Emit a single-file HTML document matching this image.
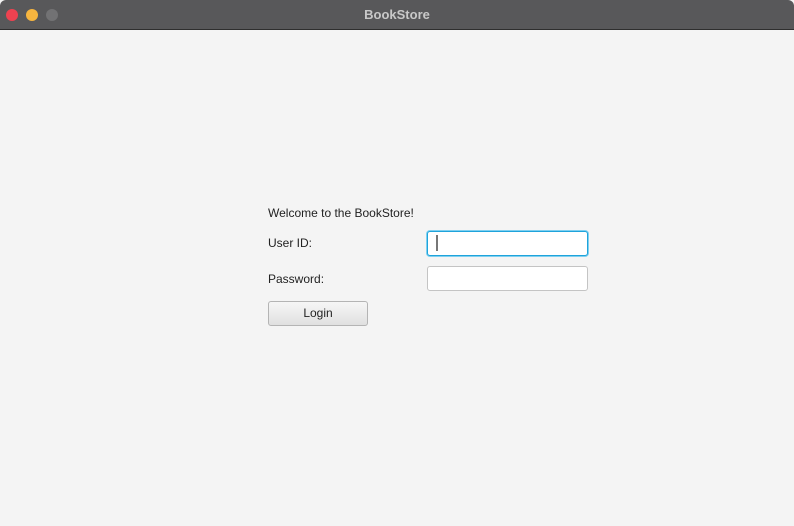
<!DOCTYPE html>
<html><head><meta charset="utf-8"><style>
body{margin:0;width:794px;height:526px;background:#f4f4f4;font-family:"Liberation Sans",sans-serif;position:relative;overflow:hidden}
.tb{position:absolute;left:0;top:0;width:794px;height:29px;background:#58585a;border-bottom:1px solid #2e2e2e;border-radius:6px 6px 0 0}
.tb .t{position:absolute;width:100%;text-align:center;top:7px;color:#c8c8c8;font-size:13px;font-weight:bold}
.d{position:absolute;top:9px;width:12px;height:12px;border-radius:50%}
.l{position:absolute;font-size:12px;color:#222}
.in{position:absolute;left:427px;width:159px;height:23px;background:#fff;border:1px solid #c4c4c4;border-radius:3px}
.f{border:1px solid #1fa3db;box-shadow:0 0 0 1px #7fd0f0}
.btn{position:absolute;left:268px;top:301px;width:98px;height:23px;border:1px solid #b4b4b4;border-radius:3px;background:linear-gradient(#f6f6f6,#e0e0e0);font-size:12px;text-align:center;line-height:23px;color:#222}
</style></head><body>
<div class="tb"><div class="t">BookStore</div>
<div class="d" style="left:6px;background:#ee4250"></div>
<div class="d" style="left:26px;background:#f6b53f"></div>
<div class="d" style="left:46px;background:#727274"></div></div>
<div class="l" style="left:268px;top:206px">Welcome to the BookStore!</div>
<div class="l" style="left:268px;top:236px">User ID:</div>
<div class="l" style="left:268px;top:272px">Password:</div>
<div class="in f" style="top:231px"><div style="position:absolute;left:8px;top:3px;width:2px;height:16px;background:#777"></div></div>
<div class="in" style="top:266px"></div>
<div class="btn">Login</div>
</body></html>
